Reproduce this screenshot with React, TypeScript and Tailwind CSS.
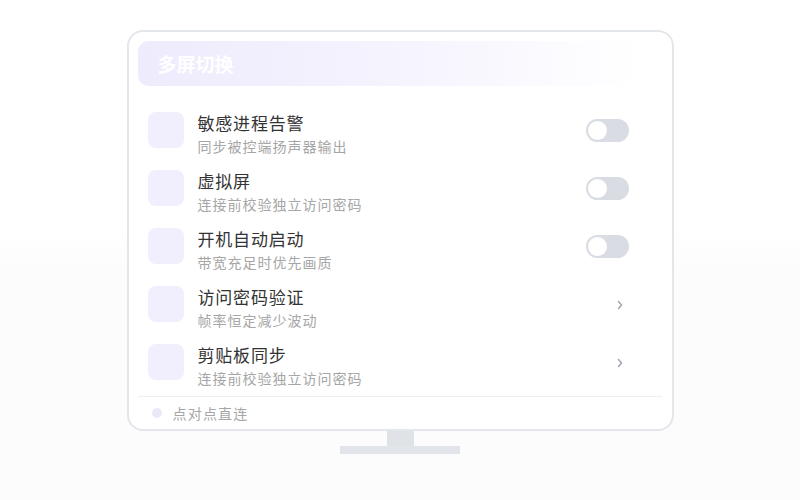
import React from "react";

const rows = [
  { title: "敏感进程告警", sub: "同步被控端扬声器输出", kind: "toggle" },
  { title: "虚拟屏", sub: "连接前校验独立访问密码", kind: "toggle" },
  { title: "开机自动启动", sub: "带宽充足时优先画质", kind: "toggle" },
  { title: "访问密码验证", sub: "帧率恒定减少波动", kind: "arrow" },
  { title: "剪贴板同步", sub: "连接前校验独立访问密码", kind: "arrow" },
];

function Toggle() {
  return (
    <div className="mt-[7px] mr-[43px] flex h-[23px] w-[43px] items-center rounded-full bg-[#d9dce3] px-[2px]">
      <div className="h-[19px] w-[19px] rounded-full bg-white" />
    </div>
  );
}

function Chevron() {
  return (
    <svg className="mt-[14px] mr-[48px]" width="8" height="10" viewBox="0 0 8 10" fill="none">
      <polyline points="2.5,1.5 5.5,5 2.5,8.5" stroke="#9ca3af" strokeWidth="1.4" strokeLinecap="round" strokeLinejoin="round" />
    </svg>
  );
}

export default function App() {
  return (
    <div
      className="flex h-[500px] w-[800px] flex-col items-center bg-[linear-gradient(to_bottom,#ffffff_46%,#fcfcfd_54%)] pt-[30px]"
      style={{ fontFamily: '"Noto Sans CJK SC", "Noto Sans", sans-serif' }}
    >
      <div className="flex h-[401px] w-[547px] flex-col rounded-[16px] border-2 border-[#e3e6eb] bg-white">
        <div className="mx-[9px] mt-[9px] mr-[32px] flex h-[45px] items-center rounded-[10px] bg-[linear-gradient(to_right,#eeebfd,#f6f4fe_55%,#ffffff)] pl-[20px]">
          <span className="text-[19px] font-semibold leading-none text-white">多屏切换</span>
        </div>

        <div className="mt-[15px] flex flex-col">
          {rows.map((r) => (
            <div key={r.title} className="flex h-[58px] items-center">
              <div className="flex h-[36px] w-full items-start">
                <div className="ml-[19px] h-[36px] w-[36px] shrink-0 rounded-[8px] bg-[#f1eefd]" />
                <div className="ml-[14px] flex flex-1 flex-col">
                  <span className="text-[17px] leading-[22px] tracking-[0.8px] text-[#333333]">{r.title}</span>
                  <span className="mt-[2.5px] text-[14px] leading-[18px] tracking-[1px] text-[#a6a6a6]">{r.sub}</span>
                </div>
                {r.kind === "toggle" ? <Toggle /> : <Chevron />}
              </div>
            </div>
          ))}
        </div>

        <div className="mx-[9px] mr-[10px] mt-[5px] h-px bg-[#eceef1]" />
        <div className="flex flex-1 items-center pl-[23px]">
          <div className="h-[10px] w-[10px] rounded-full bg-[#ebe8fb]" />
          <span className="ml-[11px] text-[14px] leading-none tracking-[1.2px] text-[#a6a6a6]">点对点直连</span>
        </div>
      </div>
      <div className="h-[15px] w-[27px] bg-[#dfe2e7]" />
      <div className="h-[8px] w-[120px] bg-[#e1e4e9]" />
    </div>
  );
}
